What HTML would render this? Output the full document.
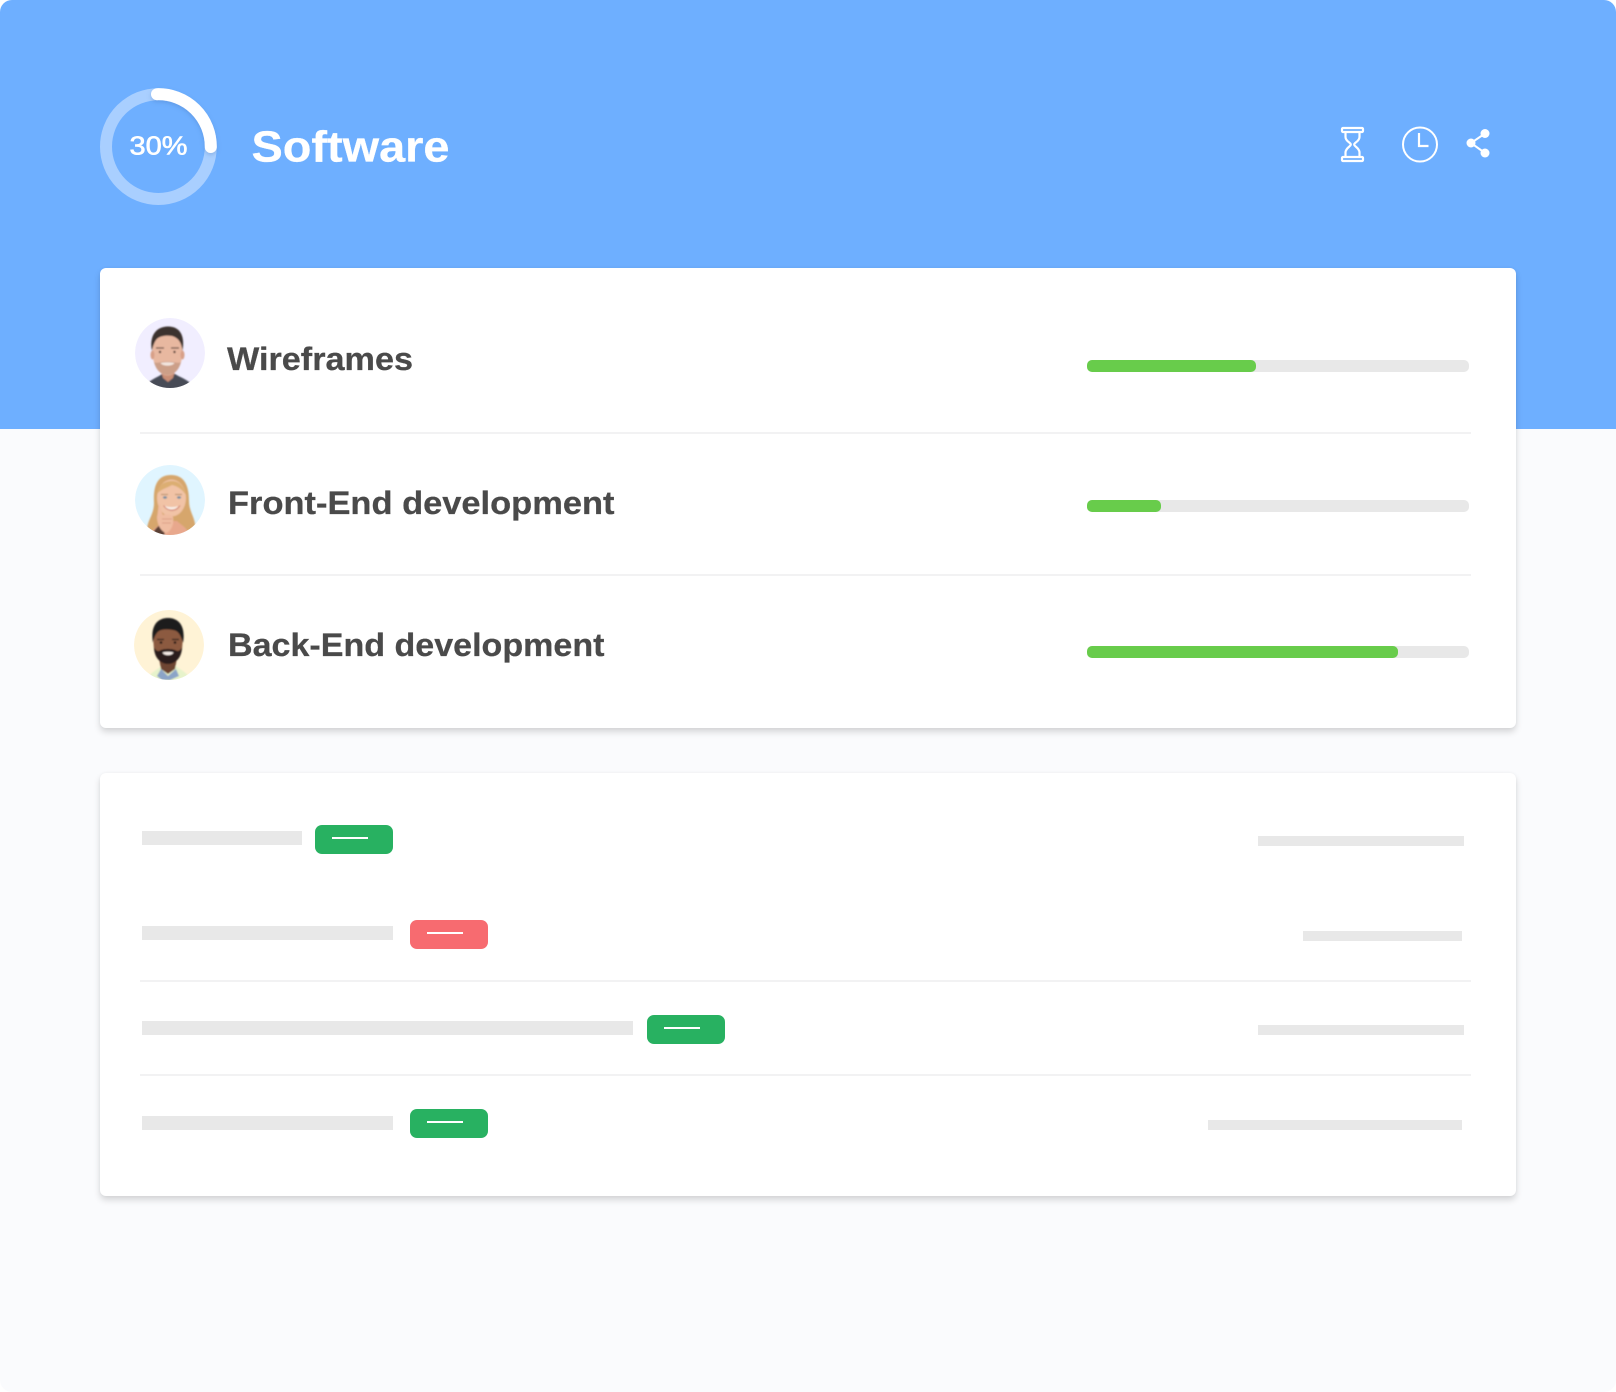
<!DOCTYPE html>
<html>
<head>
<meta charset="utf-8">
<title>Software</title>
<style>
html,body{margin:0;padding:0;background:#fff;}
#page{position:relative;width:1616px;height:1392px;overflow:hidden;background:#fafbfd;border-radius:12px;}
#hero{position:absolute;left:0;top:0;width:1616px;height:429px;background:#6eafff;}
.card{position:absolute;left:100px;width:1416px;background:#fff;border-radius:6px;box-shadow:0 4px 7px rgba(0,0,0,.15),0 0 3px rgba(0,0,0,.04);}
.track{position:absolute;left:1087px;width:382px;height:12px;border-radius:5px;background:#e8e8e8;}
.fill{position:absolute;left:1087px;height:12px;border-radius:5px;background:#68cc4b;}
.div{position:absolute;left:140px;width:1331px;height:2px;background:#f2f2f3;}
.bar{position:absolute;background:#e8e8e8;}
.badge{position:absolute;width:78px;height:29px;border-radius:7px;}
.dash{position:absolute;left:17px;width:36px;height:2px;background:#fff;}
svg{position:absolute;left:0;top:0;}
text{font-family:"Liberation Sans",sans-serif;}
</style>
</head>
<body>
<div id="page">
<div id="hero"></div>
<div class="card" style="top:268px;height:460px;"></div>
<div class="card" style="top:773px;height:423px;"></div>

<div class="div" style="top:432px;"></div>
<div class="div" style="top:574px;"></div>
<div class="div" style="top:980px;"></div>
<div class="div" style="top:1074px;"></div>

<div class="track" style="top:360px;"></div><div class="fill" style="top:360px;width:169px;"></div>
<div class="track" style="top:500px;"></div><div class="fill" style="top:500px;width:74px;"></div>
<div class="track" style="top:646px;"></div><div class="fill" style="top:646px;width:311px;"></div>

<div class="bar" style="left:142px;top:831px;width:160px;height:14px;"></div>
<div class="bar" style="left:142px;top:926px;width:251px;height:14px;"></div>
<div class="bar" style="left:142px;top:1021px;width:491px;height:14px;"></div>
<div class="bar" style="left:142px;top:1116px;width:251px;height:14px;"></div>

<div class="badge" style="left:315px;top:825px;background:#28b161;"><div class="dash" style="top:12px;"></div></div>
<div class="badge" style="left:410px;top:920px;background:#f76b70;"><div class="dash" style="top:12px;"></div></div>
<div class="badge" style="left:647px;top:1015px;background:#28b161;"><div class="dash" style="top:12px;"></div></div>
<div class="badge" style="left:410px;top:1109px;background:#28b161;"><div class="dash" style="top:12px;"></div></div>

<div class="bar" style="left:1258px;top:836px;width:206px;height:10px;"></div>
<div class="bar" style="left:1303px;top:931px;width:159px;height:10px;"></div>
<div class="bar" style="left:1258px;top:1025px;width:206px;height:10px;"></div>
<div class="bar" style="left:1208px;top:1120px;width:254px;height:10px;"></div>

<svg width="1616" height="1392" viewBox="0 0 1616 1392" xmlns="http://www.w3.org/2000/svg">
<defs>
<clipPath id="av"><circle cx="35" cy="35" r="35"/></clipPath>
<filter id="soft" x="-10%" y="-10%" width="120%" height="120%"><feGaussianBlur stdDeviation="0.8"/></filter>
<filter id="arcs" x="-30%" y="-30%" width="160%" height="160%"><feDropShadow dx="0" dy="2" stdDeviation="2" flood-color="#3f6fb0" flood-opacity=".3"/></filter>
</defs>

<!-- progress ring -->
<circle cx="158.4" cy="146.6" r="52.4" fill="none" stroke="#a9cfff" stroke-width="12"/>
<path d="M157 94.2A52.4 52.4 0 0 1 210.8 147" fill="none" stroke="#fff" stroke-width="12" stroke-linecap="round" filter="url(#arcs)"/>
<text x="129.5" y="154.5" font-size="26" fill="#fff" stroke="#fff" stroke-width=".6" textLength="58" lengthAdjust="spacingAndGlyphs">30%</text>

<text x="251.500" y="161.500" font-size="44" font-weight="700" fill="#fff" stroke="#fff" stroke-width=".3" textLength="198" lengthAdjust="spacingAndGlyphs">Software</text>

<!-- hourglass -->
<g fill="none" stroke="#fff" stroke-width="2.2" stroke-linejoin="round">
<rect x="1342" y="128" width="21" height="4" rx="1"/>
<rect x="1342" y="157" width="21" height="4" rx="1"/>
<path d="M1345.500 132V137C1345.500 141.500 1350.800 142.500 1350.800 144.500C1350.800 146.500 1345.500 148 1345.500 152.500V157"/>
<path d="M1359.500 132V137C1359.500 141.500 1354.200 142.500 1354.200 144.500C1354.200 146.500 1359.500 148 1359.500 152.500V157"/>
</g>
<!-- clock -->
<g fill="none" stroke="#fff" stroke-width="2">
<circle cx="1420" cy="144.500" r="17"/>
<path d="M1419 133V146H1428.500" stroke-width="2.200"/>
</g>
<!-- share -->
<g fill="#fff" stroke="none">
<circle cx="1485" cy="133.500" r="4.500"/>
<circle cx="1471" cy="143" r="4.500"/>
<circle cx="1485" cy="153" r="4.500"/>
</g>
<path d="M1485 133.500L1471 143L1485 153" fill="none" stroke="#fff" stroke-width="2"/>

<!-- labels -->
<g font-size="32.500" font-weight="700" fill="#4a4a4a" stroke="#4a4a4a" stroke-width=".25">
<text x="227" y="370" textLength="186" lengthAdjust="spacingAndGlyphs">Wireframes</text>
<text x="228" y="514" textLength="386.500" lengthAdjust="spacingAndGlyphs">Front-End development</text>
<text x="228" y="656" textLength="376.500" lengthAdjust="spacingAndGlyphs">Back-End development</text>
</g>

<!-- avatar 1 -->
<g transform="translate(135 318)" clip-path="url(#av)">
<circle cx="35" cy="35" r="35" fill="#f1eeff"/>
<g filter="url(#soft)">
<path d="M8 72C12 62 22 60 27 56H40C46 60 56 62 60 72Z" fill="#464b57"/>
<path d="M25 50L28 60L33 64L38 60L41 50Z" fill="#c98e76"/>
<ellipse cx="32.500" cy="34" rx="15" ry="23.500" fill="#e8b8a0"/>
<path d="M17 33C14 18 21 8.500 33 8.500C46 8.500 50 19 47.500 33C46.500 25 44 20 37 18C31 17 24 18 21 22C19 25 18 28 17 33Z" fill="#3a302d"/>
<ellipse cx="17.500" cy="37" rx="2" ry="4.500" fill="#d8a088"/>
<ellipse cx="47.500" cy="37" rx="2" ry="4.500" fill="#d8a088"/>
<path d="M21 30H29M36 30H44" stroke="#6a5044" stroke-width="1.300"/>
<circle cx="25" cy="34" r="1.200" fill="#4d3a32"/>
<circle cx="39.500" cy="34" r="1.200" fill="#4d3a32"/>
<path d="M19 44C21 53 27 57 32.500 57C38 57 44 53 46 44C43 46 40 43.500 32.500 43.500C25 43.500 22 46 19 44Z" fill="#b58a74" opacity=".55"/>
<path d="M25.500 45C29 44 36 44 39.500 45C37.500 48.500 27.500 48.500 25.500 45Z" fill="#f3e6df"/>
</g>
</g>

<!-- avatar 2 -->
<g transform="translate(135 465)" clip-path="url(#av)">
<circle cx="35" cy="35" r="35" fill="#e0f5ff"/>
<g filter="url(#soft)">
<path d="M12 66C12 55 19 50 19 38C18 18 24 10 36 10C49 10 54 20 54 36C54 48 62 54 60 66C50 74 22 74 12 66Z" fill="#d6a66c"/>
<path d="M14 72C18 62 25 60 30 56H42C46 60 52 62 56 72Z" fill="#e8a88d"/>
<path d="M16 72C18 65 24 60 28 58L30 72Z" fill="#5a4035"/>
<ellipse cx="36.500" cy="33" rx="14.500" ry="18.500" fill="#f1c3a6"/>
<path d="M22 29C23 20 30 16 37 16C44 16 49 21 51 30C47 24 42 21 37 20C32 23 26 24 22 29Z" fill="#dcae72"/>
<path d="M26 29.500H33M40 29.500H47" stroke="#b58c66" stroke-width="1"/>
<ellipse cx="30" cy="32.500" rx="2" ry="1.200" fill="#6f8aa0"/>
<ellipse cx="44" cy="32.500" rx="2" ry="1.200" fill="#6f8aa0"/>
<path d="M30 41C34 42.500 39.500 42.500 43 41C41 45.500 32 45.500 30 41Z" fill="#f8efe9"/>
<path d="M28.500 40.500C33 47 41 47 45 40.500" fill="none" stroke="#cc7d72" stroke-width=".9"/>
<path d="M24 38C23 43 23 48 22 52C22 58 25 66 31 68C37 66 39 58 38 52C36 49 30 49 28 50C26 46 26 42 24 38Z" fill="#f0bda2"/>
<path d="M27 54H37M27 58H36" stroke="#d29880" stroke-width=".7"/>
</g>
</g>

<!-- avatar 3 -->
<g transform="translate(134 610)" clip-path="url(#av)">
<circle cx="35" cy="35" r="35" fill="#fff3d6"/>
<g filter="url(#soft)">
<path d="M12 72C15 62 24 60 27 56H42C46 60 54 62 58 72Z" fill="#e7f3cb"/>
<path d="M27 59L34 66L42 59L45 66L36 70H28L23 66Z" fill="#8ba4c7"/>
<path d="M25 48L27 59L34 64L41 59L43 48Z" fill="#6e4430"/>
<ellipse cx="34" cy="33" rx="14.500" ry="21" fill="#8c5a3f"/>
<path d="M19 33C16 15 24 8 34 8C44 8 52 15 49 33C47 26 45 22 41 20.500C35 19 28 19 25 21C22 23 20 27 19 33Z" fill="#1f1a1a"/>
<path d="M20 37C20 48 27 54 34 54C41 54 48 48 48 37C46 41 44 42 41 40C37 38.500 31 38.500 27 40C24 42 22 41 20 37Z" fill="#2a1e1b"/>
<path d="M23 29.500H30M38 29.500H45" stroke="#2e221f" stroke-width="1.300"/>
<circle cx="27" cy="32.500" r="1.300" fill="#1c1412"/>
<circle cx="41" cy="32.500" r="1.300" fill="#1c1412"/>
<path d="M28.500 42.500C31 41.500 37 41.500 39.500 42.500C38 46 30 46 28.500 42.500Z" fill="#f5ebe6"/>
</g>
</g>
</svg>
</div>
</body>
</html>
